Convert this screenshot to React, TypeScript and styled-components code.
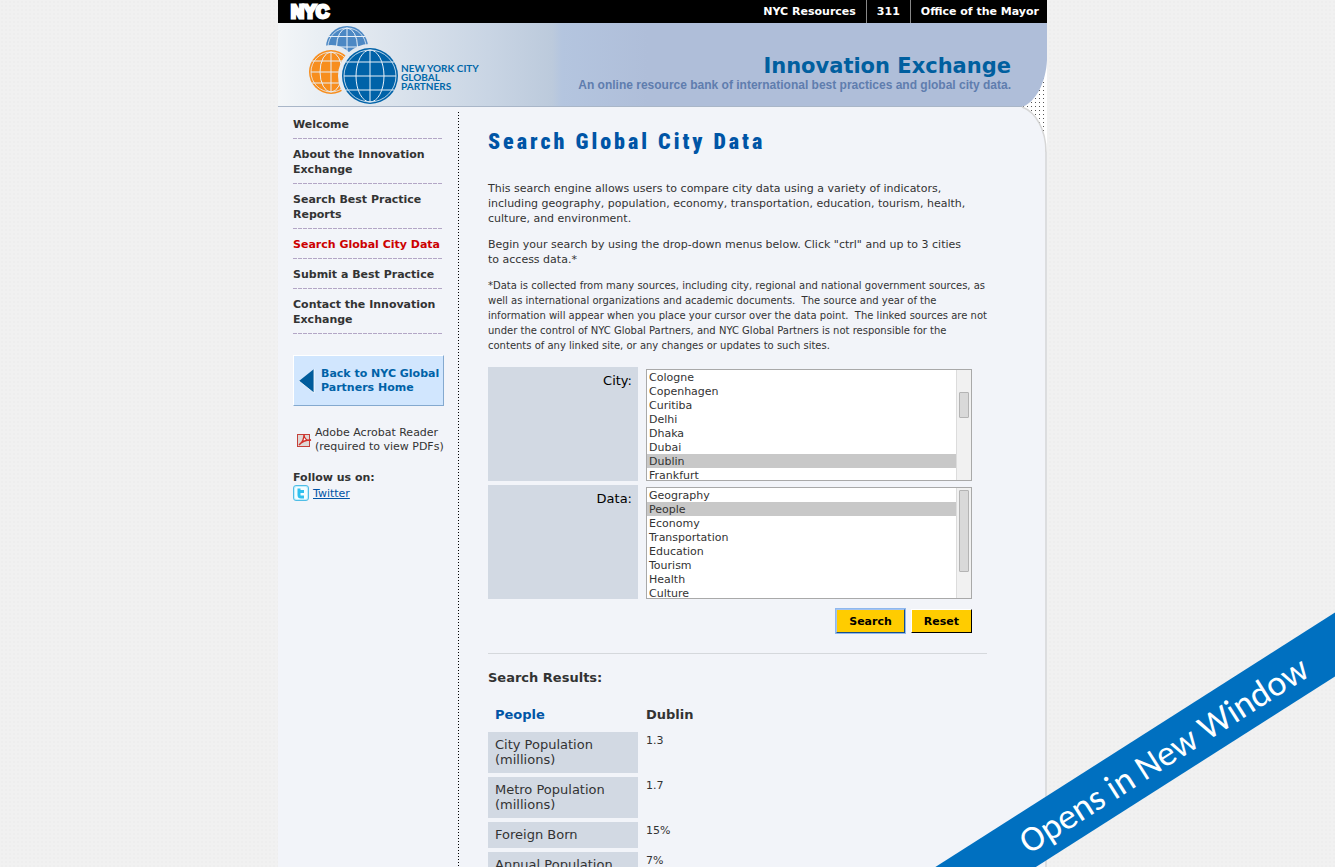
import React from "react";
import styled, { createGlobalStyle, css } from "styled-components";

const VERDANA = `Verdana, "DejaVu Sans", sans-serif`;

const GlobalStyle = createGlobalStyle`
  * { box-sizing: border-box; }
  body {
    margin: 0;
    background-color: #f1f1f1;
    background-image: radial-gradient(#eeeeee 1px, transparent 1px);
    background-size: 4px 4px;
    color: #333;
    font: 11px/15px ${VERDANA};
  }
  h1, h2, p, ul { margin: 0; padding: 0; }
  a { color: inherit; text-decoration: none; }
`;

const Page = styled.div`
  max-width: 779px;
  margin: 0 auto;
  padding-right: 10px;
`;

const TopBar = styled.nav`
  display: flex;
  justify-content: space-between;
  align-items: center;
  height: 23px;
  background: #000;
  color: #fff;
  font-weight: bold;
`;

const CityMark = styled.a`
  padding-left: 13px;
  font: bold 18px/22px "Liberation Sans", sans-serif;
  -webkit-text-stroke: 3px #fff;
`;

const TopLinks = styled.div`
  display: flex;
  align-items: stretch;
  height: 23px;
`;

const TopLink = styled.a`
  padding: 0 10px;
  line-height: 23px;
  & + & { border-left: 1px solid #888; }
  &:last-child { padding-right: 8px; }
`;

const Banner = styled.header`
  position: relative;
  display: flex;
  justify-content: space-between;
  height: 84px;
  background: linear-gradient(90deg, #f3f6f8 0, #eaeff4 40px, #c9d5e4 210px, #bccadc 274px, #b4c5df 284px, #afbed9 370px);
  border-bottom: 1px solid #a9b6c8;
`;

const Brand = styled.a`
  display: flex;
  padding-left: 30px;
  color: #0067a8;
`;

const BrandName = styled.span`
  padding-top: 41px;
  font: bold 10px/9px Lato, sans-serif;
`;

const BannerText = styled.div`
  padding: 29px 36px 0 0;
  text-align: right;
`;

const BannerTitle = styled.div`
  color: #005f9f;
  font-size: 21px;
  line-height: 28px;
  font-weight: bold;
`;

const BannerTagline = styled.div`
  color: #5f7dae;
  font: bold 12px/11px "Liberation Sans", sans-serif;
`;

const Corner = styled.svg`
  position: absolute;
  top: 37px;
  right: 0;
`;

const Columns = styled.div`
  display: flex;
  min-height: calc(100vh - 107px);
  background: #f2f4f9;
  border-right: 2px solid #dcdddf;
  padding-top: 5px;
`;

const Sidebar = styled.aside`
  flex: none;
  width: 181px;
  padding-left: 15px;
  background: repeating-linear-gradient(#000 0 1px, transparent 1px 3px) right top / 1px 100% no-repeat;
`;

const Menu = styled.ul`
  list-style: none;
  padding-top: 5px;
  font-weight: bold;
`;

const MenuItem = styled.li<{ $current?: boolean }>`
  width: 160px;
  padding-bottom: 7px;
  margin-bottom: 8px;
  color: ${(p) => (p.$current ? "#c00" : "#333")};
  background: repeating-linear-gradient(90deg, #b3a6c6 0 4px, transparent 4px 5px) left bottom / 150px 1px no-repeat;
`;

const BackLink = styled.a`
  display: flex;
  align-items: center;
  gap: 6px;
  width: 151px;
  height: 51px;
  margin-top: 21px;
  padding-left: 4px;
  background: #d1e6fe;
  border: 1px solid;
  border-color: #fff #84a9cf #84a9cf #fff;
  color: #0062a7;
  font-weight: bold;
  line-height: 14px;
`;

const Reader = styled.a`
  display: flex;
  align-items: center;
  gap: 3px;
  margin-top: 20px;
  padding-left: 3px;
  line-height: 14px;
  white-space: nowrap;
`;

const SmallNote = styled.span`
  display: block;
`;

const Follow = styled.div`
  margin-top: 16px;
  font-weight: bold;
`;

const TwitterLink = styled.a`
  display: flex;
  align-items: center;
  gap: 4px;
  color: #0053a5;
  font-weight: normal;
  text-decoration: underline;
`;

const Content = styled.main`
  flex: 1;
  min-width: 0;
  padding: 17px 58px 0 29px;
`;

const Title = styled.h1`
  color: #0055a6;
  font: 900 22px/26px "Roboto Condensed", "Liberation Sans", sans-serif;
  letter-spacing: 3px;
  margin-bottom: 26px;
`;

const Paragraph = styled.p<{ $small?: boolean }>`
  margin-bottom: 11px;
  ${(p) => p.$small && css`font-size: 10px;`}
`;

const SearchForm = styled.form`
  display: flex;
  flex-direction: column;
  gap: 4px;
  margin-top: 14px;
  padding-bottom: 20px;
  border-bottom: 1px solid #d5d8dc;
`;

const Field = styled.div`
  display: flex;
  gap: 8px;
  padding-right: 15px;
`;

const FieldLabel = styled.label`
  width: 150px;
  height: 114px;
  padding: 6px 6px 0 0;
  background: #d2d9e3;
  color: #000;
  font-size: 13px;
  text-align: right;
`;

const ListFrame = styled.div`
  display: flex;
  flex: 1;
  height: 112px;
  margin-top: 2px;
  border: 1px solid #a9a9a9;
  background: #fff;
`;

const ListBox = styled.select`
  flex: 1;
  height: 110px;
  padding: 0;
  border: 0;
  border-radius: 0;
  outline: 0;
  background: #fff;
  color: #333;
  font: 11px/14px ${VERDANA};
  overflow: hidden;
  scrollbar-width: none;
`;

const ListOption = styled.option`
  height: 14px;
  min-height: 14px;
  padding: 1px 2px 0;
  line-height: 13px;
  color: #333;
  &:checked { background: linear-gradient(#c8c8c8, #c8c8c8); color: #333; }
`;

const ScrollTrack = styled.div<{ $start: number }>`
  width: 15px;
  padding: ${(p) => p.$start}px 2px 0;
  background: #f1f1f1;
  border-left: 1px solid #dcdcdc;
`;

const ScrollThumb = styled.div<{ $length: number }>`
  width: 10px;
  height: ${(p) => p.$length}px;
  background: #d9d9d9;
  border: 1px solid #b4b4b4;
  border-radius: 1px;
`;

const Actions = styled.div`
  display: flex;
  justify-content: flex-end;
  gap: 6px;
  padding: 6px 15px 0 0;
`;

const ActionButton = styled.button<{ $focused?: boolean }>`
  height: 24px;
  padding: 1px 12px 0;
  background: #fc0;
  border: 1px solid;
  border-color: #fff #000 #000 #fff;
  border-radius: 0;
  color: #000;
  font: bold 11px/15px ${VERDANA};
  ${(p) => p.$focused && css`
    border-color: #a5c3f0 #1b4f8a #1b4f8a #a5c3f0;
    box-shadow: 0 0 0 1px #8fb8ee;
  `}
`;

const ResultsTitle = styled.h2`
  margin-top: 16px;
  font-size: 13px;
  line-height: 15px;
`;

const Results = styled.table`
  width: 100%;
  margin: 13px 0 0 -4px;
  border-spacing: 4px;
  text-align: left;
`;

const cellBox = css`
  width: 150px;
  padding: 5px 7px 6px;
  font-size: 13px;
  line-height: 15px;
`;

const GroupHead = styled.th`
  ${cellBox}
  color: #0055a6;
`;

const CityHead = styled.th`
  padding: 5px 4px 6px;
  font-size: 13px;
`;

const RowHead = styled.th`
  ${cellBox}
  background: #d2d9e3;
  font-weight: normal;
`;

const Value = styled.td`
  padding: 1px 4px;
  vertical-align: top;
`;

const RibbonClip = styled.div`
  position: fixed;
  right: 0;
  bottom: 0;
  width: 400px;
  height: 255px;
  overflow: hidden;
  pointer-events: none;
`;

const Ribbon = styled.div`
  position: absolute;
  left: -72px;
  top: 115px;
  width: 600px;
  height: 54px;
  background: #0070c0;
  color: #fff;
  font: 36px/56px Carlito, Lato, sans-serif;
  text-align: center;
  transform: rotate(-32.5deg);
`;

function Globe({ cx, cy, r, fill }: { cx: number; cy: number; r: number; fill: string }) {
  const k = r * 0.5;
  const h = r * 0.86;
  return (
    <g fill="none" stroke="#e8f0f8" strokeWidth="1">
      <circle cx={cx} cy={cy} r={r} fill={fill} stroke="none" />
      <circle cx={cx} cy={cy} r={r - 2} strokeWidth="0.8" />
      <ellipse cx={cx} cy={cy} rx={k} ry={r - 2} />
      <path d={`M${cx} ${cy - r + 2}V${cy + r - 2}M${cx - r + 2} ${cy}H${cx + r - 2}M${cx - h} ${cy - k}H${cx + h}M${cx - h} ${cy + k}H${cx + h}`} />
    </g>
  );
}

function Globes() {
  return (
    <svg width="93" height="83" viewBox="0 0 93 83" aria-hidden="true">
      <defs>
        <mask id="behindFront">
          <rect width="93" height="83" fill="#fff" />
          <circle cx="62" cy="53" r="32" fill="#000" />
        </mask>
        <mask id="behindOrange">
          <rect width="93" height="83" fill="#fff" />
          <circle cx="23" cy="49" r="27" fill="#000" />
        </mask>
      </defs>
      <g mask="url(#behindFront)">
        <g mask="url(#behindOrange)"><Globe cx={39} cy={24} r={21} fill="#4c88c4" /></g>
        <Globe cx={23} cy={49} r={22} fill="#f78e1e" />
      </g>
      <Globe cx={62} cy={53} r={28} fill="#0062a8" />
    </svg>
  );
}

const menu = [
  "Welcome",
  "About the Innovation Exchange",
  "Search Best Practice Reports",
  "Search Global City Data",
  "Submit a Best Practice",
  "Contact the Innovation Exchange",
];
const cities = ["Cologne", "Copenhagen", "Curitiba", "Delhi", "Dhaka", "Dubai", "Dublin", "Frankfurt"];
const topics = ["Geography", "People", "Economy", "Transportation", "Education", "Tourism", "Health", "Culture"];
const rows = [
  ["City Population (millions)", "1.3"],
  ["Metro Population (millions)", "1.7"],
  ["Foreign Born", "15%"],
  ["Annual Population", "7%"],
];

interface PickerProps {
  id: string;
  label: string;
  options: string[];
  selected: string;
  start: number;
  length: number;
}

function Picker({ id, label, options, selected, start, length }: PickerProps) {
  return (
    <Field>
      <FieldLabel htmlFor={id}>{label}</FieldLabel>
      <ListFrame>
        <ListBox id={id} multiple defaultValue={[selected]}>
          {options.map((o) => <ListOption key={o} value={o}>{o}</ListOption>)}
        </ListBox>
        <ScrollTrack $start={start}><ScrollThumb $length={length} /></ScrollTrack>
      </ListFrame>
    </Field>
  );
}

export default function App() {
  return (
    <>
      <GlobalStyle />
      <Page>
        <TopBar>
          <CityMark href="#">NYC</CityMark>
          <TopLinks>
            <TopLink href="#">NYC Resources</TopLink>
            <TopLink href="#">311</TopLink>
            <TopLink href="#">Office of the Mayor</TopLink>
          </TopLinks>
        </TopBar>
        <Banner>
          <Brand href="#">
            <Globes />
            <BrandName>NEW YORK CITY<br />GLOBAL<br />PARTNERS</BrandName>
          </Brand>
          <BannerText>
            <BannerTitle>Innovation Exchange</BannerTitle>
            <BannerTagline>An online resource bank of international best practices and global city data.</BannerTagline>
          </BannerText>
          <Corner width="26" height="92" viewBox="0 0 26 92" aria-hidden="true">
            <defs>
              <pattern id="dots" width="4" height="4" patternUnits="userSpaceOnUse">
                <rect width="4" height="4" fill="#fff" />
                <rect x="2" y="2" width="1" height="1" fill="#555" />
              </pattern>
            </defs>
            <path d="M26 0C25 22 15 42 1 47C15 52 25 70 25 92H26Z" fill="url(#dots)" />
            <path d="M1 47C15 52 25 70 25 92" fill="none" stroke="#d6d6d6" strokeWidth="1.5" />
          </Corner>
        </Banner>
        <Columns>
          <Sidebar>
            <Menu>
              {menu.map((m) => (
                <MenuItem key={m} $current={m === "Search Global City Data"}><a href="#">{m}</a></MenuItem>
              ))}
            </Menu>
            <BackLink href="#">
              <svg width="17" height="26" viewBox="0 0 17 26" aria-hidden="true">
                <path d="M16 1V25L1 13Z" fill="#005c9c" />
                <path d="M16 1V25L1 13" fill="none" stroke="#fff" strokeWidth="0.8" />
              </svg>
              <span>Back to NYC Global<br />Partners Home</span>
            </BackLink>
            <Reader href="#">
              <svg width="16" height="16" viewBox="0 0 16 16" aria-hidden="true">
                <rect x="1.5" y="2.5" width="12" height="12" fill="#dfd8d6" stroke="#c5403a" />
                <path d="M3 13C6 11 8 7 8 2C8 7 11 9 15 8C11 8 6 9 3 13" fill="#fff" stroke="#d3312b" strokeWidth="1.3" />
              </svg>
              <span>Adobe Acrobat Reader<SmallNote>(required to view PDFs)</SmallNote></span>
            </Reader>
            <Follow>
              Follow us on:
              <TwitterLink href="#">
                <svg width="16" height="16" viewBox="0 0 16 16" aria-hidden="true">
                  <rect x="0.5" y="0.5" width="15" height="15" rx="2.5" fill="#bfeefc" stroke="#4fbde6" />
                  <rect x="2" y="2" width="12" height="12" rx="1.5" fill="#f4fdff" />
                  <path d="M6 3.5V10Q6 12 8 12H11M6 6.5H11" fill="none" stroke="#2fc0ee" strokeWidth="3" />
                </svg>
                Twitter
              </TwitterLink>
            </Follow>
          </Sidebar>
          <Content>
            <Title>Search Global City Data</Title>
            <Paragraph>
              This search engine allows users to compare city data using a variety of indicators, including
              geography, population, economy, transportation, education, tourism, health, culture, and environment.
            </Paragraph>
            <Paragraph>
              Begin your search by using the drop-down menus below. Click "ctrl" and up to 3 cities<br />
              to access data.*
            </Paragraph>
            <Paragraph $small>
              *Data is collected from many sources, including city, regional and national government sources, as
              well as international organizations and academic documents.&nbsp; The source and year of the
              information will appear when you place your cursor over the data point.&nbsp; The linked sources are not
              under the control of NYC Global Partners, and NYC Global Partners is not responsible for the
              contents of any linked site, or any changes or updates to such sites.
            </Paragraph>
            <SearchForm onSubmit={(e) => e.preventDefault()}>
              <Picker id="city" label="City:" options={cities} selected="Dublin" start={22} length={26} />
              <Picker id="data" label="Data:" options={topics} selected="People" start={2} length={82} />
              <Actions>
                <ActionButton type="submit" $focused>Search</ActionButton>
                <ActionButton type="reset">Reset</ActionButton>
              </Actions>
            </SearchForm>
            <ResultsTitle>Search Results:</ResultsTitle>
            <Results>
              <thead>
                <tr><GroupHead scope="col">People</GroupHead><CityHead scope="col">Dublin</CityHead></tr>
              </thead>
              <tbody>
                {rows.map(([name, value]) => (
                  <tr key={name}><RowHead scope="row">{name}</RowHead><Value>{value}</Value></tr>
                ))}
              </tbody>
            </Results>
          </Content>
        </Columns>
      </Page>
      <RibbonClip><Ribbon>Opens in New Window</Ribbon></RibbonClip>
    </>
  );
}
